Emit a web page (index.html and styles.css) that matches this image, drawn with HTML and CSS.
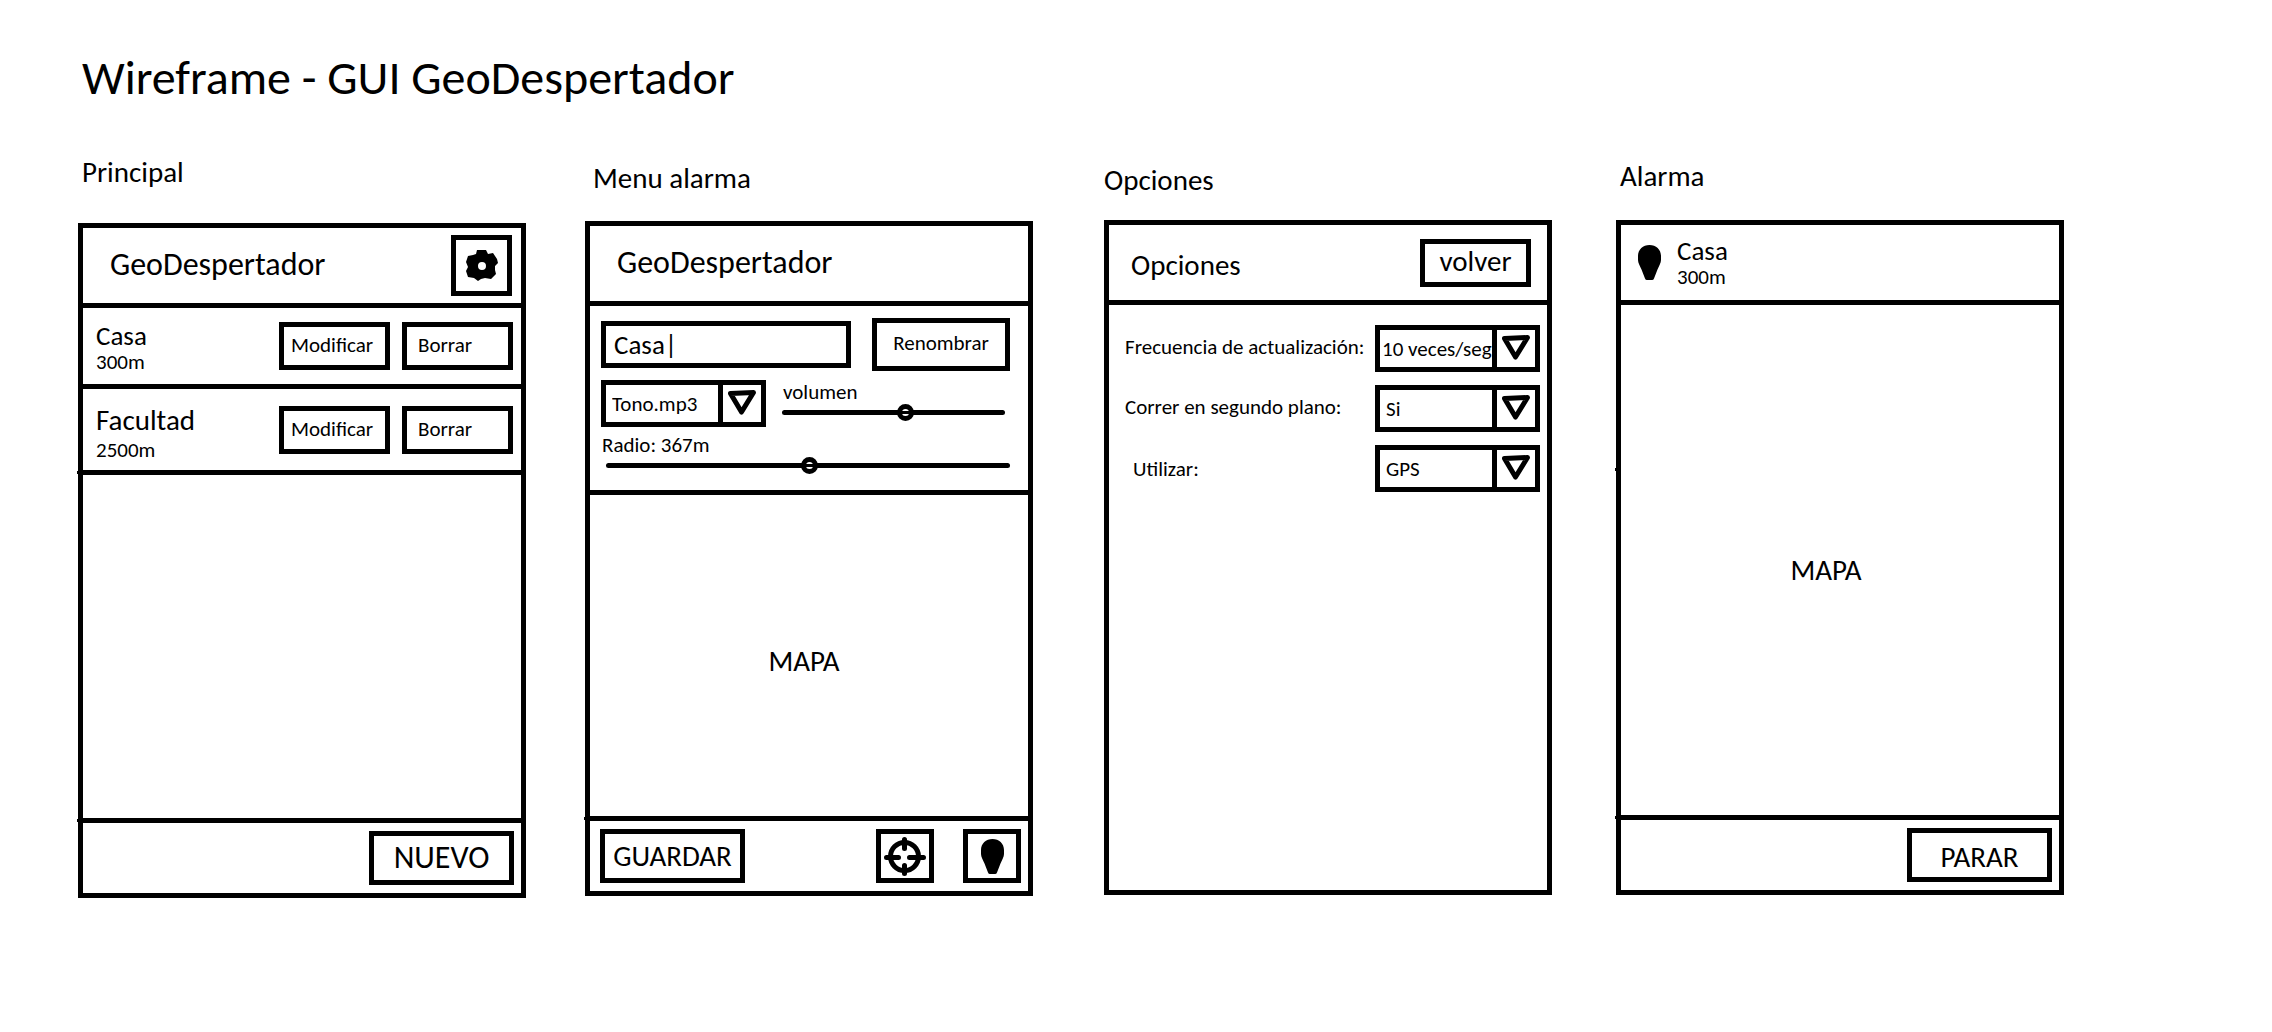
FILE: index.html
```html
<!DOCTYPE html>
<html lang="es">
<head>
<meta charset="utf-8">
<meta name="viewport" content="width=device-width, initial-scale=1">
<title>Wireframe - GUI GeoDespertador</title>
<link rel="stylesheet" href="styles.css">
</head>
<body>
<svg class="sprite" aria-hidden="true">
  <symbol id="pin" viewBox="0 0 23 35">
    <path d="M11.500 0C5 0 0 4.500 0 11v4c0 3 2 6 3.500 9.500L7 33.500Q7.500 35 9 35h5q1.500 0 2-1.500l3.500-9C21 21 23 18 23 15v-4C23 4.500 18 0 11.500 0z"/>
  </symbol>
  <symbol id="arrow" viewBox="0 0 28 25">
    <path d="M2.500 3.500L25.500 2.500L13.500 22z" fill="none" stroke="#000" stroke-width="5" stroke-linejoin="round"/>
  </symbol>
</svg>

<header class="page-header">
  <h1 class="page-title">Wireframe - GUI GeoDespertador</h1>
</header>

<main class="screens">
  <section class="screen screen--main">
    <h2 class="caption">Principal</h2>
    <div class="phone">
      <div class="bar bar--top">
        <h3 class="app-name">GeoDespertador</h3>
        <button class="btn btn--gear" type="button" aria-label="Opciones">
          <svg width="32" height="31" viewBox="0 0 32 31" aria-hidden="true">
            <path fill-rule="evenodd" d="M11 0h9l2 4 5-1 4 6 1 4-3 3 0 4 1 4-5 5-6-1-4 1-3 2-4-3-6-1-2-6 2-4-2-5 2-6 5-1 3-1zM16 12a4 4 0 1 0 0 8 4 4 0 0 0 0-8z"/>
          </svg>
        </button>
      </div>
      <ul class="alarms">
        <li class="alarm">
          <div class="place">
            <span class="place-name">Casa</span>
            <span class="place-distance">300m</span>
          </div>
          <button class="btn btn--edit" type="button">Modificar</button>
          <button class="btn btn--delete" type="button">Borrar</button>
        </li>
        <li class="alarm alarm--tall stub">
          <div class="place">
            <span class="place-name">Facultad</span>
            <span class="place-distance">2500m</span>
          </div>
          <button class="btn btn--edit" type="button">Modificar</button>
          <button class="btn btn--delete" type="button">Borrar</button>
        </li>
      </ul>
      <div class="bar bar--bottom stub">
        <button class="btn btn--action btn--large" type="button">NUEVO</button>
      </div>
    </div>
  </section>

  <section class="screen screen--edit">
    <h2 class="caption">Menu alarma</h2>
    <div class="phone">
      <div class="bar bar--top">
        <h3 class="app-name">GeoDespertador</h3>
      </div>
      <form class="settings">
        <div class="settings-row settings-row--name">
          <input class="name-input" type="text" value="Casa|" aria-label="Nombre">
          <button class="btn btn--rename" type="button">Renombrar</button>
        </div>
        <div class="settings-row">
          <div class="dropdown">
            <select class="dropdown-select" aria-label="Tono"><option>Tono.mp3</option></select>
            <svg class="dropdown-arrow" aria-hidden="true"><use href="#arrow" width="28" height="25" x="5" y="5"/></svg>
          </div>
          <div class="field field--volume">
            <label class="field-label" for="volume">volumen</label>
            <input class="slider" id="volume" type="range" min="0" max="100" value="56">
          </div>
        </div>
        <div class="field">
          <label class="field-label" for="radius">Radio: 367m</label>
          <input class="slider slider--radius" id="radius" type="range" min="0" max="730" value="367">
        </div>
      </form>
      <div class="map">MAPA</div>
      <div class="bar bar--bottom bar--tools stub">
        <button class="btn btn--action" type="button">GUARDAR</button>
        <button class="btn btn--tool btn--locate" type="button" aria-label="Mi ubicación">
          <svg width="42" height="39" viewBox="0 0 42 39" aria-hidden="true" fill="none" stroke="#000" stroke-width="5" stroke-linecap="round">
            <circle cx="20.500" cy="19.500" r="14"/>
            <path d="M20.500 2.500v9M20.500 28.500v8M2.500 20.500h12M25.500 20.500h14"/>
          </svg>
        </button>
        <button class="btn btn--tool" type="button" aria-label="Marcar lugar">
          <svg class="pin" aria-hidden="true"><use href="#pin"/></svg>
        </button>
      </div>
    </div>
  </section>

  <section class="screen screen--options">
    <h2 class="caption">Opciones</h2>
    <div class="phone">
      <div class="bar bar--top">
        <h3 class="bar-title">Opciones</h3>
        <button class="btn btn--back" type="button">volver</button>
      </div>
      <form class="options">
        <div class="option">
          <label class="option-label" for="frequency">Frecuencia de actualización:</label>
          <div class="dropdown dropdown--full">
            <select class="dropdown-select" id="frequency"><option>10 veces/seg</option></select>
            <svg class="dropdown-arrow" aria-hidden="true"><use href="#arrow" width="28" height="25" x="5" y="5"/></svg>
          </div>
        </div>
        <div class="option">
          <label class="option-label" for="background">Correr en segundo plano:</label>
          <div class="dropdown">
            <select class="dropdown-select" id="background"><option>Si</option></select>
            <svg class="dropdown-arrow" aria-hidden="true"><use href="#arrow" width="28" height="25" x="5" y="5"/></svg>
          </div>
        </div>
        <div class="option">
          <label class="option-label option-label--indent" for="source">Utilizar:</label>
          <div class="dropdown">
            <select class="dropdown-select" id="source"><option>GPS</option></select>
            <svg class="dropdown-arrow" aria-hidden="true"><use href="#arrow" width="28" height="25" x="5" y="5"/></svg>
          </div>
        </div>
      </form>
    </div>
  </section>

  <section class="screen screen--alarm">
    <h2 class="caption">Alarma</h2>
    <div class="phone">
      <div class="bar bar--top bar--place">
        <svg class="pin" aria-hidden="true"><use href="#pin"/></svg>
        <div class="place">
          <span class="place-name">Casa</span>
          <span class="place-distance">300m</span>
        </div>
      </div>
      <div class="map map--full">MAPA</div>
      <div class="bar bar--bottom stub">
        <button class="btn btn--action btn--stop" type="button">PARAR</button>
      </div>
    </div>
  </section>
</main>
</body>
</html>
```

FILE: styles.css
```css
:root {
  --line: 5px solid #000;
  --text-sm: 21px;
  --text-place: 27px;
  --text-md: 29px;
  --text-lg: 32px;
  --text-xl: 48px;
}

*,
*::before {
  box-sizing: border-box;
}

body {
  margin: 0;
  padding: 48px 208px 48px 78px;
  background: #fff;
  color: #000;
  font-family: Carlito, Lato, sans-serif;
  font-size: var(--text-sm);
  line-height: 24px;
}

h1,
h2,
h3,
ul {
  margin: 0;
  padding: 0;
  font-weight: 400;
  list-style: none;
}

button,
input,
select {
  font: inherit;
  color: inherit;
}

.sprite {
  position: absolute;
  width: 0;
  height: 0;
}

.page-title {
  padding-left: 4px;
  font-size: var(--text-xl);
  line-height: 60px;
}

/* Four phones; the odd tracks are the phones, the even ones the space between */
.screens {
  display: grid;
  grid-template-columns:
    minmax(0, 448fr) minmax(0, 59fr) minmax(0, 448fr) minmax(0, 71fr)
    minmax(0, 448fr) minmax(0, 64fr) minmax(0, 448fr);
  align-items: start;
  padding-top: 46px;
}

.screen--main { grid-column: 1; }
.screen--edit { grid-column: 3; padding-top: 6px; }
.screen--options { grid-column: 5; padding-top: 8px; }
.screen--alarm { grid-column: 7; padding-top: 4px; }

.caption {
  padding: 0 4px 33px;
  font-size: var(--text-md);
  line-height: 36px;
}

.screen--edit .caption { padding: 0 8px 25px; }
.screen--options .caption { padding: 0 0 22px; }
.screen--alarm .caption { padding-bottom: 26px; }

.phone {
  display: flex;
  flex-direction: column;
  aspect-ratio: 448 / 675;
  border: var(--line);
}

.bar {
  display: flex;
  align-items: center;
}

.bar--top {
  justify-content: space-between;
  height: 80px;
  padding: 0 9px 0 27px;
  border-bottom: var(--line);
}

.bar--bottom {
  justify-content: flex-end;
  height: 75px;
  margin-top: auto;
  padding: 0 7px;
  border-top: var(--line);
}

.app-name {
  padding-bottom: 2px;
  font-size: var(--text-lg);
  line-height: 40px;
}

.bar-title {
  padding-top: 4px;
  font-size: var(--text-md);
  line-height: 36px;
}

.screen--options .bar--top { padding: 0 16px 0 22px; }

/* Short ends of the dividers that reach past the frame */
.stub,
.map--full {
  position: relative;
}

.stub::before,
.map--full::before {
  content: "";
  position: absolute;
  left: -6px;
  width: 1px;
  height: 3px;
  background: #000;
}

.bar--bottom.stub::before { top: -4px; }
.alarm.stub::before { bottom: -4px; }
.map--full::before { top: 32%; }

.btn {
  display: flex;
  align-items: center;
  justify-content: center;
  flex: none;
  height: 48px;
  padding: 0;
  border: var(--line);
  background: #fff;
}

.btn--gear {
  width: 61px;
  height: 61px;
}

.btn--edit,
.btn--delete {
  justify-content: flex-start;
  width: 111px;
  padding-bottom: 2px;
}

.btn--edit { padding-left: 7px; }
.btn--delete { padding-left: 11px; }

.btn--action {
  width: 145px;
  height: 54px;
  font-size: var(--text-md);
}

.btn--large { font-size: var(--text-lg); }
.btn--stop { padding-top: 4px; }

.btn--rename {
  width: 138px;
  height: 53px;
  padding-bottom: 4px;
}

.btn--tool {
  width: 58px;
  height: 54px;
}

.btn--back {
  width: 111px;
  padding-bottom: 4px;
  font-size: var(--text-md);
}

.bar--tools { padding-left: 10px; }
.btn--locate { margin: 0 29px 0 auto; }

.alarm {
  display: flex;
  align-items: center;
  gap: 12px;
  height: 81px;
  padding: 0 8px 0 13px;
  border-bottom: var(--line);
}

.alarm--tall { height: 86px; }

.place {
  display: flex;
  flex: 1;
  flex-direction: column;
}

.alarm .place { padding-top: 4px; }

.place-name {
  font-size: var(--text-place);
  line-height: 28px;
}

.alarm--tall .place-name {
  font-size: var(--text-md);
  line-height: 36px;
}

.pin {
  flex: none;
  width: 23px;
  height: 35px;
}

.bar--place {
  gap: 16px;
  padding-left: 17px;
}

.settings {
  padding: 12px 18px 16px 11px;
  border-bottom: var(--line);
}

.settings-row {
  display: flex;
  gap: 16px;
  margin-bottom: 6px;
}

.settings-row--name {
  align-items: center;
  gap: 21px;
  margin-bottom: 9px;
}

.name-input {
  flex: 1;
  min-width: 0;
  height: 47px;
  padding: 0 8px;
  border: var(--line);
  background: #fff;
  font-size: var(--text-place);
}

.dropdown {
  display: grid;
  flex: none;
  grid-template-columns: 1fr 43px;
  width: 165px;
  height: 47px;
  border: var(--line);
}

.dropdown-select {
  grid-area: 1 / 1 / 2 / 3;
  min-width: 0;
  padding: 0 43px 0 6px;
  border: 0;
  background: none;
  appearance: none;
}

.dropdown--full .dropdown-select { padding-left: 2px; }

.dropdown-arrow {
  grid-area: 1 / 2 / 2 / 3;
  width: 43px;
  height: 37px;
  border-left: var(--line);
  pointer-events: none;
}

.field {
  display: flex;
  flex: 1;
  flex-direction: column;
}

.field--volume { padding-right: 5px; }
.field-label { padding-left: 1px; }

.slider {
  width: 100%;
  height: 17px;
  margin: 0;
  background: none;
  appearance: none;
}

.slider--radius {
  width: auto;
  margin-left: 5px;
}

.slider::-webkit-slider-runnable-track {
  height: 5px;
  border-radius: 3px;
  background: #000;
}

.slider::-webkit-slider-thumb {
  width: 17px;
  height: 17px;
  margin-top: -6px;
  border: 5px solid #000;
  border-radius: 50%;
  background: linear-gradient(#fff 2px, #000 2px, #000 5px, #fff 5px);
  appearance: none;
}

.map {
  display: flex;
  flex: 1;
  align-items: center;
  justify-content: center;
  padding: 10px 10px 0 0;
  font-size: var(--text-md);
}

.map--full { padding: 20px 28px 0 0; }

.options {
  display: flex;
  flex-direction: column;
  gap: 13px;
  padding: 20px 7px 20px 16px;
}

.option {
  display: flex;
  align-items: center;
  justify-content: space-between;
}

.option-label { padding-bottom: 4px; }

.option-label--indent {
  padding-bottom: 0;
  padding-left: 8px;
}
```
